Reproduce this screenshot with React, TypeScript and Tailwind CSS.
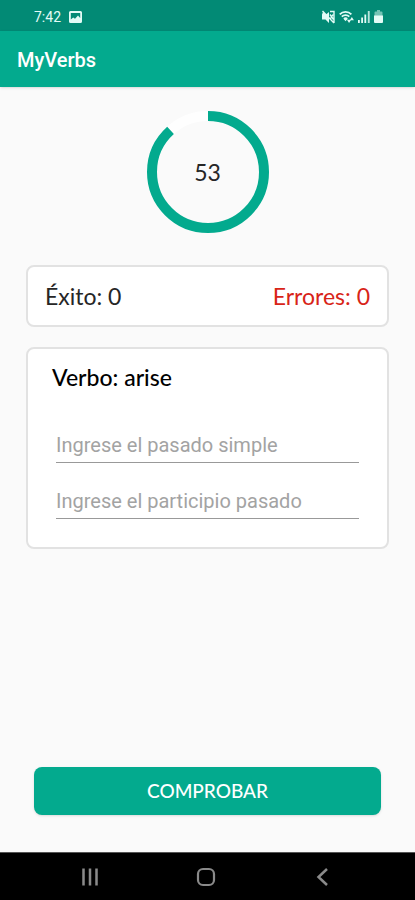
import { useState } from "react";

const TOTAL_SECONDS = 60;

type CountdownProps = {
  seconds: number;
};

const StatusBar = () => (
  <div className="flex h-[31px] items-center justify-between bg-[#028a75] pt-0.5 pr-8 pl-[34px] text-[#e3fbf6]">
    <div className="flex items-center gap-2">
      <span className="font-['Roboto',sans-serif] text-sm">7:42</span>
      <svg width="13" height="12" viewBox="0 0 13 12" aria-hidden="true">
        <path
          fill="currentColor"
          fillRule="evenodd"
          d="M1.5 0h10A1.5 1.5 0 0 1 13 1.5v9a1.5 1.5 0 0 1-1.5 1.5h-10A1.5 1.5 0 0 1 0 10.5v-9A1.5 1.5 0 0 1 1.5 0zM1.8 2v6.500l2.400-2 1.800 1.300L9 4.500l2.200 2.500V2z"
        />
      </svg>
    </div>
    <div className="flex items-center gap-1">
      <svg width="13" height="14" viewBox="0 0 13 14" aria-hidden="true">
        <path fill="currentColor" d="M0 4.500L1 2l3 2.500L7 2v11L3.500 9.500H0z" />
        <path
          fill="none"
          stroke="currentColor"
          strokeWidth="1.4"
          d="M.5 1l11.500 12M8 4.500l3.500 5M11 4.500l-3 5M8 1.500h4V13"
        />
      </svg>
      <svg width="15" height="14" viewBox="0 0 16 14" aria-hidden="true">
        <g fill="none" stroke="currentColor" strokeWidth="1.9">
          <path d="M.8 4.300a8.500 8.500 0 0 1 12.400 0" />
          <path d="M3 6.700a5.600 5.600 0 0 1 8 0" />
          <path d="M5.200 9a2.600 2.600 0 0 1 3.600 0" />
        </g>
        <path
          fill="currentColor"
          d="M5 9h4L7 11.500zM8.500 10h4.500L10.700 13.500zM11.500 10.500l2.200-3.500 2.200 3.500z"
        />
      </svg>
      <svg width="12" height="13" viewBox="0 0 12 13" aria-hidden="true">
        <path
          fill="currentColor"
          d="M0 10h1.800v3H0zM3.200 7.500H5V13H3.200zM6.400 4.500h1.800V13H6.400z"
        />
        <path fill="currentColor" opacity=".8" d="M9.800 1h1.900v12H9.800z" />
      </svg>
      <svg width="9" height="13" viewBox="0 0 9 13" aria-hidden="true">
        <path
          fill="currentColor"
          opacity=".5"
          d="M3 0h3v1.500h1.500a1 1 0 0 1 1 1V6h-8V2.500a1 1 0 0 1 1-1H3z"
        />
        <path fill="currentColor" d="M0 5.500h9V12a1 1 0 0 1-1 1H1a1 1 0 0 1-1-1z" />
      </svg>
    </div>
  </div>
);

const Countdown = ({ seconds }: CountdownProps) => {
  const percent = (seconds / TOTAL_SECONDS) * 100;

  return (
    <div className="grid size-[122px] place-items-center self-center">
      <svg
        viewBox="0 0 122 122"
        className="col-start-1 row-start-1 size-full"
        aria-hidden="true"
      >
        <circle cx="61" cy="61" r="56" fill="none" stroke="#fefefe" strokeWidth="10" />
        <circle
          cx="61"
          cy="61"
          r="56"
          fill="none"
          stroke="#03aa8e"
          strokeWidth="10"
          pathLength={100}
          strokeDasharray={`${percent} 100`}
          transform="rotate(-90 61 61)"
        />
      </svg>
      <span className="col-start-1 row-start-1 text-[23px] leading-7">
        {seconds}
      </span>
    </div>
  );
};

const NavigationBar = () => (
  <nav className="flex h-12 items-center justify-between border-t border-[#555] bg-black pr-[83px] pl-20 text-[#8a8a8a]">
    <button type="button" aria-label="Recientes">
      <svg width="20" height="20" viewBox="0 0 20 20" fill="none">
        <path
          stroke="currentColor"
          strokeWidth="2.500"
          d="M3.500 1.500v17M10 1.500v17M16.500 1.500v17"
        />
      </svg>
    </button>
    <button type="button" aria-label="Inicio">
      <svg width="20" height="20" viewBox="0 0 20 20" fill="none">
        <rect
          x="2"
          y="2"
          width="16"
          height="16"
          rx="5"
          stroke="currentColor"
          strokeWidth="2.200"
        />
      </svg>
    </button>
    <button type="button" aria-label="Atrás">
      <svg width="20" height="20" viewBox="0 0 20 20" fill="none">
        <path
          stroke="currentColor"
          strokeWidth="2.500"
          d="M15 2L6.500 10l8.500 8"
        />
      </svg>
    </button>
  </nav>
);

const inputStyle =
  "h-9 w-full border-b border-[#999] bg-transparent font-['Roboto',sans-serif] text-xl text-black outline-none placeholder:text-[#a3a3a3]";

export default function App() {
  const [simple, setSimple] = useState("");
  const [participle, setParticiple] = useState("");

  return (
    <div className="flex min-h-screen flex-col bg-[#fafafa] font-['Lato',sans-serif] text-[#262626]">
      <StatusBar />
      <header className="flex h-14 items-center bg-[#03aa8e] px-[17px] pt-0.5 shadow-sm">
        <h1 className="font-['Roboto',sans-serif] text-xl font-medium text-white">
          MyVerbs
        </h1>
      </header>

      <main className="flex grow flex-col px-[26px] pt-6 pb-[37px]">
        <Countdown seconds={53} />

        <section className="mt-8 flex h-[62px] items-center justify-between rounded-lg border-2 border-[#e2e2e2] bg-white px-[17px] text-[23px] leading-7">
          <p>Éxito: 0</p>
          <p className="text-[#d82418]">Errores: 0</p>
        </section>

        <form
          id="verb"
          className="mt-5 flex flex-col rounded-lg border-2 border-[#e2e2e2] bg-white px-7 pt-[14px] pb-7"
          onSubmit={(e) => e.preventDefault()}
        >
          <h2 className="-ml-1 text-[23px] leading-7 font-medium text-black">
            Verbo: arise
          </h2>
          <input
            type="text"
            aria-label="Pasado simple"
            placeholder="Ingrese el pasado simple"
            className={`${inputStyle} mt-9`}
            value={simple}
            onChange={(e) => setSimple(e.target.value)}
          />
          <input
            type="text"
            aria-label="Participio pasado"
            placeholder="Ingrese el participio pasado"
            className={`${inputStyle} mt-5`}
            value={participle}
            onChange={(e) => setParticiple(e.target.value)}
          />
        </form>

        <button
          type="submit"
          form="verb"
          className="mx-2 mt-auto h-12 rounded-lg bg-[#03aa8e] text-[19px] font-medium text-white shadow-sm"
        >
          COMPROBAR
        </button>
      </main>

      <NavigationBar />
    </div>
  );
}
